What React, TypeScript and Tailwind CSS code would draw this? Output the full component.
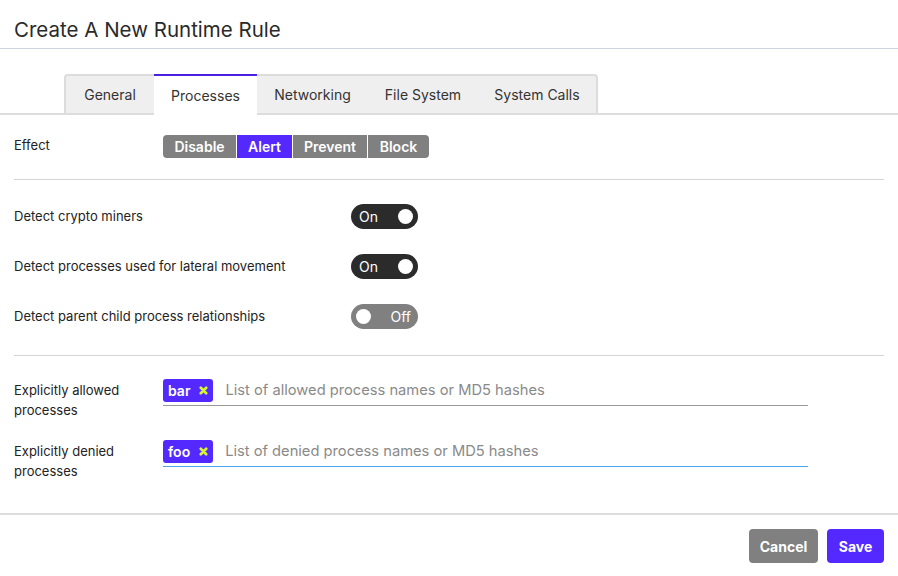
import React from "react";

const font = { fontFamily: "Inter, 'Noto Sans', sans-serif" };

function Toggle({ on }: { on: boolean }) {
  return on ? (
    <div className="flex h-[25px] w-[67px] items-center justify-between rounded-full bg-[#2b2b2b] pl-[8px] pr-[5px]">
      <span className="text-[14px] leading-none text-white">On</span>
      <span className="h-[15px] w-[15px] rounded-full bg-white" />
    </div>
  ) : (
    <div className="flex h-[25px] w-[67px] items-center justify-between rounded-full bg-[#808080] pl-[5px] pr-[7px]">
      <span className="h-[15px] w-[15px] rounded-full bg-white" />
      <span className="text-[14px] leading-none text-white">Off</span>
    </div>
  );
}

function Chip({ label }: { label: string }) {
  return (
    <div className="flex h-[23px] items-center gap-[9px] rounded-[3px] bg-[#5429ff] pl-[5px] pr-[5px]">
      <span className="text-[14px] font-semibold leading-none text-white">{label}</span>
      <svg width="9" height="9" viewBox="0 0 10 10">
        <path d="M2 2 L8 8 M8 2 L2 8" stroke="#d7f531" strokeWidth="3" strokeLinecap="round" />
      </svg>
    </div>
  );
}

export default function App() {
  const tabs = ["General", "Processes", "Networking", "File System", "System Calls"];
  const widths = [90, 103, 111, 110, 120];
  return (
    <div className="h-[576px] w-[898px] bg-white text-[#222]" style={font}>
      <div className="flex h-[49px] items-center border-b border-[#cfd3dd] px-[14px] pt-[13px]">
        <h1 className="text-[20.5px] font-normal text-[#2a2a2a]">Create A New Runtime Rule</h1>
      </div>
      <div className="mt-[25px] flex border-b-2 border-[#dddddd] pl-[64px]">
        {tabs.map((t, i) => {
          const active = i === 1;
          return (
            <div
              key={t}
              style={{ width: widths[i] }}
              className={
                "-mb-[2px] flex h-[41px] items-center justify-center text-[14px] " +
                (active
                  ? "border-t-2 border-[#4a21e0] bg-white"
                  : "border-t-2 border-[#dcdcdc] bg-[#efefef] border-b-2 border-b-[#dddddd] " +
                    (i === 0 ? "rounded-tl-[4px] border-l-2 border-l-[#dcdcdc] " : "") +
                    (i === 4 ? "rounded-tr-[4px] border-r-2 border-r-[#dcdcdc] " : ""))
              }
            >
              <span className="text-[#333]">{t}</span>
            </div>
          );
        })}
      </div>

      <div className="px-[14px]">
        <div className="flex h-[65px] items-center border-b border-[#d5d5d5] pb-[2px]">
          <div className="w-[149px] text-[13px]">Effect</div>
          <div className="flex h-[23px] overflow-hidden rounded-[4px] text-[14px] font-semibold text-white">
            <div className="flex w-[73px] items-center justify-center bg-[#808080]">Disable</div>
            <div className="ml-px flex w-[55px] items-center justify-center bg-[#5429ff]">Alert</div>
            <div className="ml-px flex w-[74px] items-center justify-center bg-[#808080]">Prevent</div>
            <div className="ml-px flex w-[61px] items-center justify-center bg-[#808080]">Block</div>
          </div>
        </div>

        <div className="flex flex-col gap-[25px] border-b border-[#d5d5d5] pb-[26px] pt-[24px]">
          {[
            ["Detect crypto miners", true],
            ["Detect processes used for lateral movement", true],
            ["Detect parent child process relationships", false],
          ].map(([label, on]) => (
            <div key={label as string} className="flex h-[25px] items-center">
              <div className="w-[337px] text-[13px]">{label as string}</div>
              <Toggle on={on as boolean} />
            </div>
          ))}
        </div>

        <div className="flex flex-col gap-[20px] pb-[32px] pt-[23px]">
          <div className="flex">
            <div className="w-[149px] pt-[1px] text-[13px] leading-[20px]">
              Explicitly allowed
              <br />
              processes
            </div>
            <div className="flex h-[27px] w-[645px] items-start gap-[12px] border-b border-[#9a9a9a]">
              <Chip label="bar" />
              <span className="text-[14.7px] leading-[23px] text-[#8a8a8a]">List of allowed process names or MD5 hashes</span>
            </div>
          </div>
          <div className="flex">
            <div className="w-[149px] pt-[1px] text-[13px] leading-[20px]">
              Explicitly denied
              <br />
              processes
            </div>
            <div className="flex h-[27px] w-[645px] items-start gap-[12px] border-b border-[#4aa3ef]">
              <Chip label="foo" />
              <span className="text-[14.7px] leading-[23px] text-[#8a8a8a]">List of denied process names or MD5 hashes</span>
            </div>
          </div>
        </div>
      </div>

      <div className="flex justify-end gap-[9px] border-t-2 border-[#dddddd] px-[14px] pt-[14px]">
        <button className="h-[34px] w-[69px] rounded-[4px] bg-[#808080] text-[14px] font-bold text-white">Cancel</button>
        <button className="h-[34px] w-[57px] rounded-[4px] bg-[#5429ff] text-[14px] font-bold text-white">Save</button>
      </div>
    </div>
  );
}
